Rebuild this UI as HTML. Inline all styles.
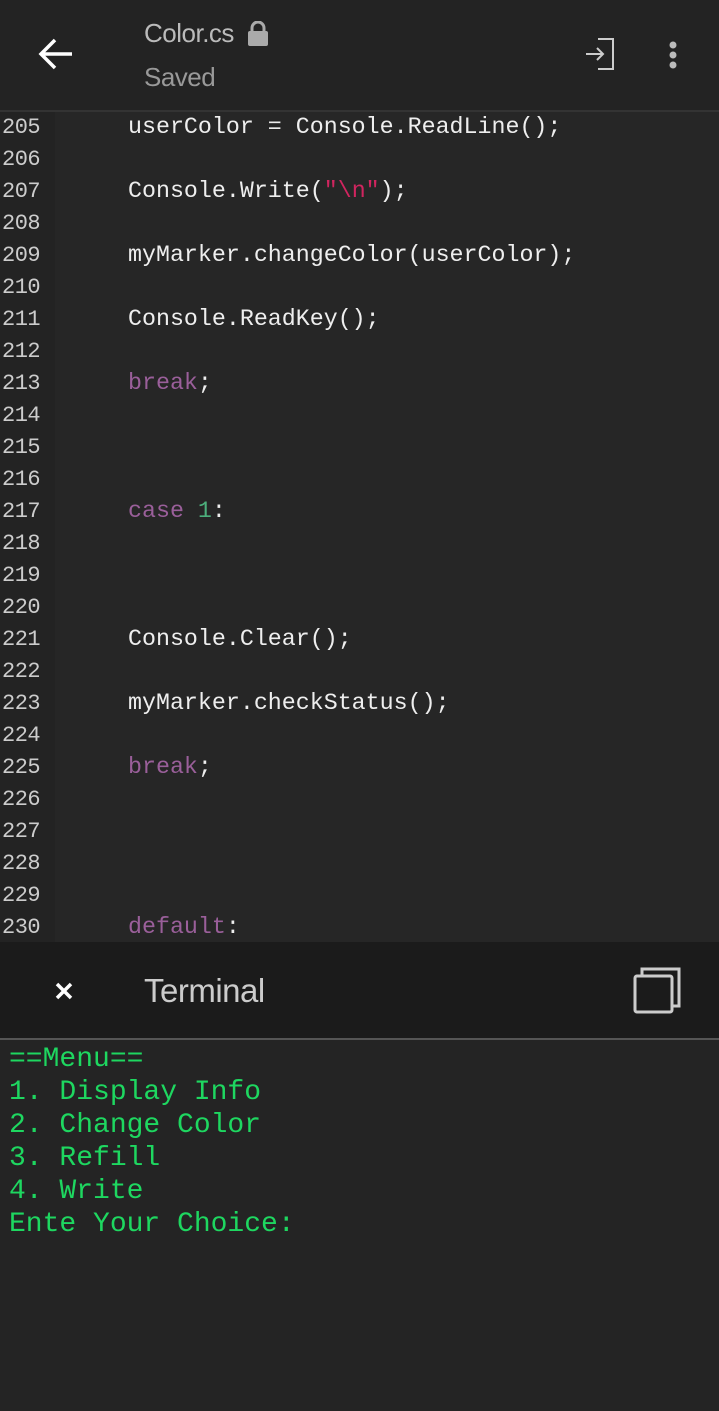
<!DOCTYPE html>
<html><head><meta charset="utf-8"><style>
body{margin:0;width:719px;height:1411px;background:#242424;overflow:hidden;font-family:"Liberation Sans",sans-serif;position:relative}
.hdr{position:absolute;left:0;top:0;width:719px;height:110px;background:#232323;border-bottom:2px solid #333}
.code{position:absolute;top:112px;left:0;width:719px;height:830px;background:#262626}
.gut{position:absolute;left:0;top:0;width:55px;height:830px;background:#232323}
.ln{position:absolute;left:2px;font-family:"Liberation Mono",monospace;font-size:22px;color:#ccc;letter-spacing:-0.5px}
.cl{position:absolute;left:128px;font-family:"Liberation Mono",monospace;font-size:23.3px;color:#eee}
.kw{color:#9a5f9a}.num{color:#4caf7c}.str{color:#d0255f}
.th{position:absolute;top:942px;left:0;width:719px;height:96px;background:#1b1b1b;border-bottom:2px solid #555}
.term{position:absolute;top:1043px;left:9px;font-family:"Liberation Mono",monospace;font-size:28px;line-height:33px;color:#1ed760;white-space:pre}
</style></head><body>
<div class="hdr">
<svg style="position:absolute;left:38px;top:37px" width="36" height="34" viewBox="0 0 36 34"><path d="M34 17H4M17 3L3 17l14 14" stroke="#fff" stroke-width="3.5" fill="none"/></svg>
<div style="position:absolute;left:144px;top:18px;font-size:26px;color:#bbb;letter-spacing:-0.5px">Color.cs</div>
<svg style="position:absolute;left:247px;top:21px" width="22" height="26" viewBox="0 0 22 26"><rect x="1" y="10" width="20" height="15" rx="2" fill="#aaa"/><path d="M5 11V7a6 6 0 0 1 12 0v4" stroke="#aaa" stroke-width="3" fill="none"/></svg>
<div style="position:absolute;left:144px;top:62px;font-size:26px;color:#999;letter-spacing:-0.5px">Saved</div>
<svg style="position:absolute;left:584px;top:37px" width="32" height="34" viewBox="0 0 32 34"><path d="M14 2h15v30H14M2 17h17M13 11l6 6-6 6" stroke="#ccc" stroke-width="2" fill="none"/></svg>
<svg style="position:absolute;left:668px;top:41px" width="10" height="28"><circle cx="5" cy="4" r="3.5" fill="#bbb"/><circle cx="5" cy="14" r="3.5" fill="#bbb"/><circle cx="5" cy="24" r="3.5" fill="#bbb"/></svg>
</div>
<div class="code"><div class="gut"></div>
<div class="ln" style="top:3px">205</div><div class="ln" style="top:35px">206</div><div class="ln" style="top:67px">207</div><div class="ln" style="top:99px">208</div><div class="ln" style="top:131px">209</div><div class="ln" style="top:163px">210</div><div class="ln" style="top:195px">211</div><div class="ln" style="top:227px">212</div><div class="ln" style="top:259px">213</div><div class="ln" style="top:291px">214</div><div class="ln" style="top:323px">215</div><div class="ln" style="top:355px">216</div><div class="ln" style="top:387px">217</div><div class="ln" style="top:419px">218</div><div class="ln" style="top:451px">219</div><div class="ln" style="top:483px">220</div><div class="ln" style="top:515px">221</div><div class="ln" style="top:547px">222</div><div class="ln" style="top:579px">223</div><div class="ln" style="top:611px">224</div><div class="ln" style="top:643px">225</div><div class="ln" style="top:675px">226</div><div class="ln" style="top:707px">227</div><div class="ln" style="top:739px">228</div><div class="ln" style="top:771px">229</div><div class="ln" style="top:803px">230</div>
<div class="cl" style="top:2px">userColor = Console.ReadLine();</div>
<div class="cl" style="top:66px">Console.Write(<span class="str">"\n"</span>);</div>
<div class="cl" style="top:130px">myMarker.changeColor(userColor);</div>
<div class="cl" style="top:194px">Console.ReadKey();</div>
<div class="cl" style="top:258px"><span class="kw">break</span>;</div>
<div class="cl" style="top:386px"><span class="kw">case</span> <span class="num">1</span>:</div>
<div class="cl" style="top:514px">Console.Clear();</div>
<div class="cl" style="top:578px">myMarker.checkStatus();</div>
<div class="cl" style="top:642px"><span class="kw">break</span>;</div>
<div class="cl" style="top:802px"><span class="kw">default</span>:</div>
</div>
<div class="th">
<svg style="position:absolute;left:54px;top:39px" width="20" height="20"><path d="M3 3l14 14M17 3L3 17" stroke="#fff" stroke-width="3.5"/></svg>
<div style="position:absolute;left:144px;top:30px;font-size:33px;color:#ccc;letter-spacing:-0.5px">Terminal</div>
<svg style="position:absolute;left:632px;top:23px" width="50" height="50" viewBox="0 0 50 50"><path d="M10 10V4h37v37h-6" stroke="#ccc" stroke-width="3" fill="none"/><rect x="3" y="11" width="37" height="36" rx="2" stroke="#ccc" stroke-width="3" fill="none"/></svg>
</div>
<div class="term">==Menu==
1. Display Info
2. Change Color
3. Refill
4. Write
Ente Your Choice:</div>
</body></html>
